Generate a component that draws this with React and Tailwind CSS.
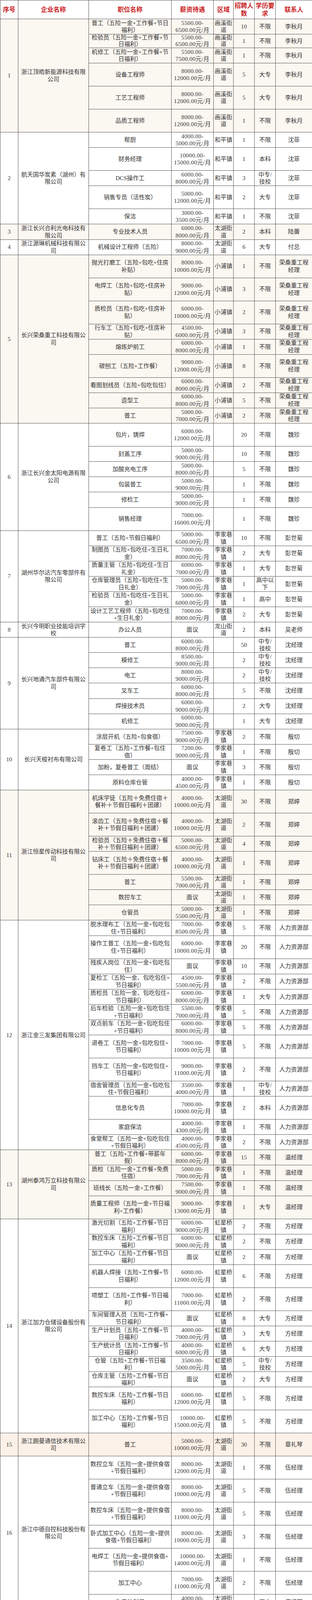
const s = (a, b) => `${a}.00-\n${b}.00元/月`;
const M = "面议";
const B = "不限";
const D = "大专";
const K = "本科";
const G = "高中";
const Z = "中专/\n技校";

const HX = "画溪街\n道";
const TH = "太湖街\n道";
const LJX = "李家巷\n镇";
const HXQ = "虹星桥\n镇";
const ZC = "雉城街\n道";

// row height by type: S = two lines, T = tall, O = one line, X = squeezed
const H = { S: "h-[39.1px] leading-[18.5px]", T: "h-[59px] leading-[18.5px]", O: "h-[19.5px] leading-[18px]", X: "h-[35px] leading-[17px]" };

const companies = [
  { name: "浙江顶皓新能源科技有限\n公司", area: HX, contact: "李秋月", tint: true, rows: [
    ["S", "普工（五险一金+工作餐+节日\n福利）", s(5500, 6500), 10, B],
    ["X", "检验员（五险一金+工作餐+节\n日福利）", s(5500, 6500), 1, B],
    ["S", "机修工（五险一金+工作餐+节\n日福利）", s(5500, 7500), 1, B],
    ["T", "设备工程师", s(8000, 12000), 5, D],
    ["T", "工艺工程师", s(8000, 12000), 5, D],
    ["T", "品质工程师", s(8000, 12000), 1, B],
  ] },
  { name: "航天国华炭素（湖州）有\n限公司", area: "和平镇", contact: "沈菲", rows: [
    ["S", "帮厨", s(4000, 5000), 1, B],
    ["T", "财务经理", s(10000, 15000), 1, K],
    ["S", "DCS操作工", s(6000, 8000), 3, Z],
    ["T", "销售专员（活性炭）", s(5000, 12000), 2, D],
    ["S", "保洁", s(3000, 3500), 1, B],
  ] },
  { name: "浙江长兴合利光电科技有\n限公司", area: TH, contact: "陆蕾", tint: true, rows: [
    ["S", "专业技术人员", s(6000, 8000), 2, K],
  ] },
  { name: "浙江源琳机械科技有限公\n司", area: TH, contact: "付总", rows: [
    ["S", "机械设计工程师（五险）", s(8000, 9000), 6, D],
  ] },
  { name: "长兴荣桑重工科技有限公\n司", area: "小浦镇", contact: "荣桑重工程\n经理", tint: true, rows: [
    ["T", "抛光打磨工（五险+包吃+住房\n补贴）", s(8000, 10000), 1, B],
    ["T", "电焊工（五险+包吃+住房补\n贴）", s(9000, 12000), 3, B],
    ["T", "质检员（五险+包吃+住房补\n贴）", s(6000, 10000), 2, B],
    ["S", "行车工（五险+包吃+住房补\n贴）", s(4500, 6000), 3, B],
    ["S", "熔炼炉前工", s(6000, 8000), 1, B],
    ["T", "碳刨工（五险+工作餐）", s(9000, 12000), 8, B],
    ["S", "看图划线员（五险+包吃包住）", s(6000, 8000), 2, B],
    ["S", "造型工", s(6000, 8000), 5, B],
    ["S", "普工", s(5000, 7000), 2, B],
  ] },
  { name: "浙江长兴金太阳电源有限\n公司", area: "", contact: "魏珍", rows: [
    ["T", "包片，铸焊", s(6000, 12000), 20, B],
    ["S", "封盖工序", s(5000, 9000), 10, B],
    ["S", "加酸充电工序", s(5000, 8000), 5, B],
    ["S", "包装普工", s(5000, 9000), 1, B],
    ["S", "修检工", s(5000, 9000), 1, B],
    ["T", "销售经理", s(7000, 16000), 1, B],
  ] },
  { name: "湖州华尔达汽车零部件有\n限公司", area: LJX, contact: "彭世菊", rows: [
    ["S", "普工（五险+节假日福利）", s(5000, 6500), 10, B],
    ["S", "制图员（五险+包吃住+生日礼\n金）", s(7000, 8000), 2, D],
    ["S", "质量主管（五险+包吃住+生日\n礼金）", s(6000, 7000), 1, D],
    ["S", "仓库管理员（五险+包吃住+生\n日礼金）", s(5000, 7000), 1, "高中以\n下"],
    ["S", "检验员（五险+包吃住+生日礼\n金）", s(5000, 6000), 1, G],
    ["S", "设计工艺工程师（五险+包吃住\n+生日礼金）", s(7000, 8000), 2, D],
  ] },
  { name: "长兴今明职业技能培训学\n校", area: "龙山街\n道", contact: "吴老师", rows: [
    ["S", "办公人员", M, 2, K],
  ] },
  { name: "长兴地通汽车部件有限公\n司", area: "", contact: "沈经理", rows: [
    ["S", "普工", s(6000, 8000), 50, Z],
    ["S", "模修工", s(8500, 9000), 2, Z],
    ["S", "电工", s(8000, 9000), 2, Z],
    ["S", "叉车工", s(6000, 8000), 5, B],
    ["S", "焊接技术员", s(6000, 9000), 2, D],
    ["S", "机修工", s(6000, 9000), 1, D],
  ] },
  { name: "长兴天梭衬布有限公司", area: LJX, contact: "殷切", rows: [
    ["S", "涂层开机（五险+包食宿）", s(7500, 9000), 2, B],
    ["S", "复卷工（五险+工作餐+包住\n宿）", s(7200, 9000), 1, B],
    ["S", "加粉，复卷普工（周结）", M, 3, B],
    ["S", "原料仓库仓管", s(4000, 4500), 1, B],
  ] },
  { name: "浙江恒星传动科技有限公\n司", area: TH, contact: "郑婷", tint: true, rows: [
    ["T", "机床学徒（五险＋免费住宿＋\n餐补＋节假日福利＋团建）", s(4000, 10000), 30, B],
    ["T", "滚齿工（五险＋免费住宿＋餐\n补＋节假日福利＋团建）", s(4000, 10000), 2, B],
    ["S", "检验员（五险＋免费住宿＋餐\n补＋节假日福利＋团建）", s(5000, 6500), 4, B],
    ["T", "钻床工（五险＋免费住宿＋餐\n补＋节假日福利＋团建）", s(4000, 10000), 1, B],
    ["S", "普工", s(5500, 7000), 1, B],
    ["S", "数控车工", M, 1, B],
    ["S", "仓管员", s(5000, 5500), 1, B],
  ] },
  { name: "浙江金三发集团有限公司", area: LJX, contact: "人力资源部", rows: [
    ["S", "脱水理布工（五险一金+包吃包\n住+节日福利）", s(7000, 8500), 5, B],
    ["T", "操作工普工（五险一金+包吃包\n住+节日福利）", s(6000, 10000), 20, B],
    ["S", "残疾人岗位（五险一金+包吃包\n住）", M, 10, B],
    ["S", "复检工（五险一金、包吃包住+\n节日福利）", s(4500, 5500), 2, B],
    ["S", "质检员（五险一金、包吃包住+\n节日福利）", s(6000, 8000), 1, D],
    ["S", "后车检验（五险一金+包吃包住\n+节日福利）", s(5500, 7000), 5, B],
    ["S", "双点前车（五险一金+包吃包住\n+节日福利）", s(6000, 8000), 5, B],
    ["T", "退卷工（五险一金+包吃包住+\n节日福利）", s(7000, 10000), 5, B],
    ["T", "挡车工（五险一金+包吃包住+\n节日福利）", s(9000, 11000), 2, B],
    ["S", "宿舍管理员（五险一金+包吃包\n住+节假日福利）", s(3500, 4000), 1, Z],
    ["T", "信息化专员", s(7000, 10000), 2, K],
    ["S", "家庭保洁", s(4000, 4300), 1, B],
    ["S", "食堂帮工（五险一金+包吃包住\n+节假日福利）", s(4000, 4500), 2, B],
  ] },
  { name: "湖州泰鸿万立科技有限公\n司", area: LJX, contact: "温经理", tint: true, rows: [
    ["S", "普工（五险+工作餐+带薪年\n假）", s(6000, 8000), 15, B],
    ["S", "质检（五险一金+工作餐+免费\n住宿）", s(5000, 7000), 1, B],
    ["S", "班线长（五险一金+工作餐）", s(7500, 9000), 1, B],
    ["T", "质量工程师（五险一金+节日福\n利+工作餐）", s(9000, 13000), 1, D],
  ] },
  { name: "浙江加力仓储设备股份有\n限公司", area: HXQ, contact: "方经理", rows: [
    ["S", "激光切割（五险+工作餐+节日\n福利）", s(6000, 9000), 2, B],
    ["S", "数控车床（五险+工作餐+节日\n福利）", s(6000, 9000), 2, B],
    ["S", "加工中心（五险+工作餐+节日\n福利）", M, 2, B],
    ["T", "机器人焊接（五险+工作餐+节\n日福利）", s(6000, 12000), 6, B],
    ["T", "喷塑工（五险+工作餐+节日福\n利）", s(7000, 11000), 2, B],
    ["S", "车间管理人员（五险+工作餐+\n节日福利）", M, 8, D],
    ["S", "生产计划员（五险+工作餐+节\n日福利）", s(4000, 7000), 3, D],
    ["S", "生产统计员（五险+工作餐+节\n日福利）", s(4000, 6000), 6, D],
    ["S", "仓管（五险+工作餐+节日福\n利）", s(3500, 5000), 5, Z],
    ["S", "仓库主管（五险+工作餐+节日\n福利）", M, 2, D],
    ["T", "数控车床（五险+工作餐+节日\n福利）", s(6000, 12000), 5, B],
    ["T", "加工中心（五险+工作餐+节日\n福利）", s(10000, 15000), 5, B],
  ] },
  { name: "浙江朗曼通信技术有限公\n司", area: TH, contact: "章礼琴", pink: true, rows: [
    ["T", "普工", s(5000, 10000), 30, B],
  ] },
  { name: "浙江中德自控科技股份有\n限公司", area: TH, contact: "伍经理", rows: [
    ["T", "数控立车（五险一金+提供食宿\n+节假日福利）", s(8000, 12000), 1, B],
    ["T", "普通立车（五险一金+提供食宿\n+节假日福利）", s(8000, 10000), 5, B],
    ["T", "数控车床（五险一金+提供食宿\n+节假日福利）", s(8000, 11000), 5, B],
    ["T", "卧式加工中心（五险一金+提供\n食宿+节假日福利）", s(8000, 10000), 3, B],
    ["T", "电焊工（五险一金+提供食宿+\n节假日福利）", s(10000, 14000), 1, B],
    ["T", "加工中心", s(7000, 11000), 2, B],
    ["S", "生产计划员", s(4000, 5500), 3, G],
  ] },
  { name: "浙江诚品无纺科技有限公\n司", area: LJX, contact: "官相萍", tint: true, rows: [
    ["T", "普工（五险+包吃包住）", s(8500, 12000), 5, B],
    ["T", "设备主管（五险+包食宿）", s(8000, 10000), 2, D],
    ["S", "仓库组长", M, 1, B],
    ["S", "叉车工", s(5600, 9000), 5, B],
    ["S", "质检员", s(7500, 9500), 10, Z],
  ] },
  { name: "浙江锦诚新材料股份有限\n公司", area: ZC, contact: "蔡经理", rows: [
    ["S", "普工", s(4000, 6000), 5, B],
    ["S", "售后服务", s(4000, 8000), 2, D],
    ["T", "销售经理", s(3000, 10000), 3, D],
    ["S", "外贸员", s(4000, 6000), 1, B],
    ["S", "项目经理", s(5000, 9000), 1, D],
    ["S", "技术指导", s(5000, 9000), 1, D],
  ] },
  { name: "天涵之星新材料（浙江）\n有限公司", area: "煤山镇", contact: "李女士", tint: true, rows: [
    ["T", "操作工（六险+包食宿+节日福\n利）", s(7000, 11000), 10, B],
    ["S", "仓管员（六险+包食宿+节日福\n利）", s(4500, 5000), 3, B],
    ["T", "普工（六险+包食宿+节日福\n利）", s(7000, 12000), 10, B],
    ["S", "平面设计、室内设计（五险+节\n日福利）", M, 1, B],
    ["O", "生产计划员（五险+节日福利）", M, 1, B],
    ["S", "质检员（五险+节日福利）", s(4000, 6000), 1, B],
  ] },
  { name: "浙江多蒙佳乐服饰有限公\n司", area: TH, contact: "倪敏", rows: [
    ["T", "缝纫工（五险＋免费食宿＋年\n终奖＋节假日福利＋免费培\n训）", s(4000, 10000), 5, B],
    ["T", "检验员（五险＋免费食宿＋年\n终奖＋节假日福利＋免费培\n训）", s(5000, 7000), 10, B],
    ["S", "电脑绣花普工（五险＋免费食\n宿＋年终奖＋节假日福利）", s(5000, 6000), 1, B],
    ["S", "拉布工（五险＋免费食宿＋年\n终奖＋节假日福利）", s(5000, 6500), 1, B],
    ["S", "剪线工（五险＋免费食宿＋年\n终奖＋节假日福利）", s(4000, 6000), 3, B],
  ] },
  { name: "浙江宏耀玻璃有限公司", area: "煤山镇", contact: "卢利忠", tint: true, rows: [
    ["S", "普工（设备主操工）（五险+节\n假日福利）", s(5000, 8000), 5, B],
    ["S", "生产管理员（五险+节假日福\n利）", s(4000, 5000), 1, Z],
    ["S", "车间包装工", s(4000, 5000), 2, G],
    ["O", "临时工（包装工）", M, 10, B],
  ] },
  { name: "浙江味之源食品有限公司", area: TH, contact: "李经理", rows: [
    ["S", "设备维修工", s(6000, 7500), 1, B],
    ["S", "仓库主管", s(6000, 7500), 1, B],
    ["S", "辅助工", s(4500, 6000), 1, B],
    ["S", "包装工", s(4500, 6000), 1, B],
  ] },
  { name: "浙江湖州威达集团股份有\n限公司", area: TH, contact: "何经理", rows: [
    ["S", "生产储备干部", s(4000, 8000), 2, Z],
    ["S", "配料管理员", s(4500, 5500), 2, B],
    ["S", "操作工", s(4000, 7000), 20, B],
    ["S", "机修工（可学徒）", s(3500, 7000), 5, G],
    ["S", "成品打包工", s(4000, 8000), 2, B],
    ["T", "销售", s(3600, 10000), 2, D],
    ["S", "残疾人岗", s(3000, 8000), 20, B],
    ["S", "生产文员", s(3500, 5000), 2, G],
    ["S", "搬运装卸工", s(5000, 8000), 1, B],
  ] },
  { name: "浙江东宇电气股份有限公\n司", area: HX, contact: "郭女士", rows: [
    ["S", "钣金折弯工(五险一金+长白班+\n节日福利)", s(6500, 7500), 3, G],
    ["S", "组装工（五险一金+长白班+节\n日福利）", s(4500, 5000), 6, B],
    ["S", "安装工(五险一金+长白班+节日\n福利)", s(5500, 6000), 2, B],
  ] },
];

const cell = "flex shrink-0 items-center justify-center whitespace-pre border-r border-b border-[#555] px-[2px] text-center";
const head = `${cell} text-[16px] leading-[20px] font-bold text-[#c8201e]`;

function Company({ c, n }) {
  const bg = c.pink ? "bg-[#fcf1e8]" : c.tint ? "bg-[#fbf7f1]" : "bg-white";
  return (
    <div className={`flex shrink-0 ${bg}`}>
      <div className={`${cell} w-[46px] leading-[18.5px]`}>{n}</div>
      <div className={`${cell} w-[181px] leading-[18.5px]`}>{c.name}</div>
      <div className="flex w-[573px] flex-col">
        {c.rows.map(([t, pos, sal, count, edu], i) => (
          <div key={i} className={`flex shrink-0 ${H[t]}`}>
            <div className={`${cell} w-[212px]`}>{pos}</div>
            <div className={`${cell} w-[108px] tracking-[0.4px]`}>{sal}</div>
            <div className={`${cell} w-[51px]`}>{c.area}</div>
            <div className={`${cell} w-[54px]`}>{count}</div>
            <div className={`${cell} w-[54px]`}>{edu}</div>
            <div className={`${cell} w-[94px]`}>{c.contact}</div>
          </div>
        ))}
      </div>
    </div>
  );
}

export default function App() {
  return (
    <div className="flex h-[5896px] w-[800px] flex-col overflow-hidden border-t border-l border-[#555] bg-white font-['Liberation_Serif','Noto_Sans_CJK_SC',serif] text-[15px] text-[#333]">
      <div className="flex h-[48px] shrink-0 bg-white">
        <div className={`${head} w-[46px]`}>序号</div>
        <div className={`${head} w-[181px]`}>企业名称</div>
        <div className={`${head} w-[212px]`}>职位名称</div>
        <div className={`${head} w-[108px]`}>薪资待遇</div>
        <div className={`${head} w-[51px]`}>区域</div>
        <div className={`${head} w-[54px]`}>{"招聘人\n数"}</div>
        <div className={`${head} w-[54px]`}>{"学历要\n求"}</div>
        <div className={`${head} w-[94px]`}>联系人</div>
      </div>
      {companies.map((c, i) => (
        <Company key={i} c={c} n={i + 1} />
      ))}
    </div>
  );
}
